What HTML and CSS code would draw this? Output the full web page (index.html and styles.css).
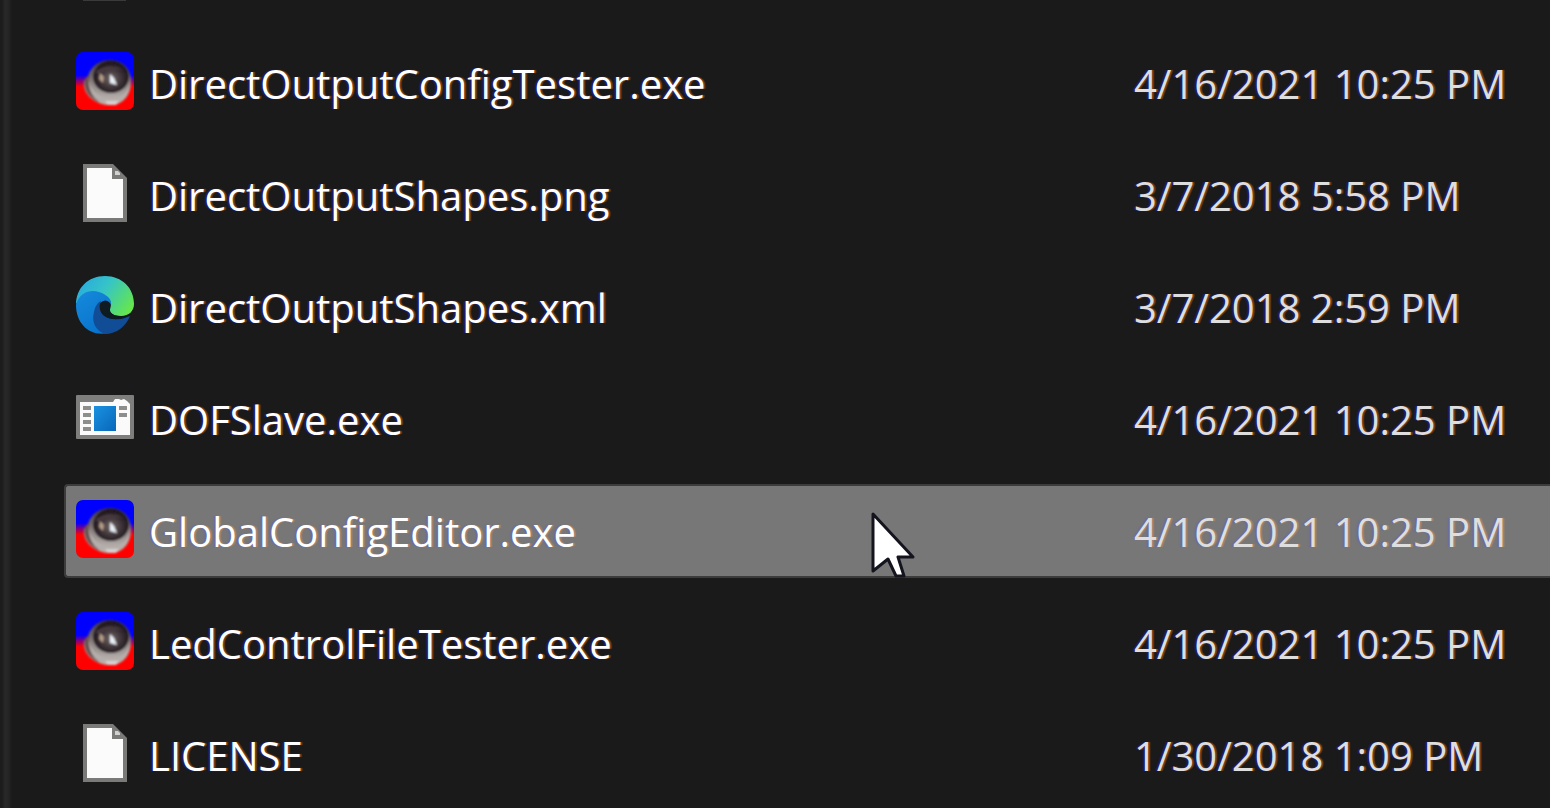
FILE: index.html
```
<!DOCTYPE html>
<html lang="en">
<head>
    <meta charset="UTF-8" />
    <meta name="viewport" content="width=device-width, initial-scale=1" />
    <title>DirectOutput</title>
    <link rel="stylesheet" href="styles.css">
</head>
<body>
    <!-- Shared icons -->
    <svg class="icon-defs" aria-hidden="true">
        <defs>
            <linearGradient id="rimFill" x1="0" y1="0" x2="0" y2="1">
                <stop offset="0" stop-color="#3b3038" />
                <stop offset="0.5" stop-color="#8a8280" />
                <stop offset="1" stop-color="#c4bebc" />
            </linearGradient>
            <radialGradient id="ballFill" cx="0.5" cy="0.55" r="0.55">
                <stop offset="0" stop-color="#75686a" />
                <stop offset="0.5" stop-color="#40363a" />
                <stop offset="1" stop-color="#170f14" />
            </radialGradient>
            <linearGradient id="skyFill" x1="0" y1="0" x2="0" y2="1">
                <stop offset="0.4" stop-color="#0000ff" />
                <stop offset="0.5" stop-color="#8a0078" />
                <stop offset="0.6" stop-color="#ff0000" />
            </linearGradient>
            <linearGradient id="edgeTop" x1="0" y1="0.2" x2="1" y2="0.7">
                <stop offset="0" stop-color="#28a8e0" />
                <stop offset="0.45" stop-color="#36c5c6" />
                <stop offset="1" stop-color="#66e64c" />
            </linearGradient>
            <linearGradient id="edgeLeft" x1="0" y1="0" x2="0.6" y2="1">
                <stop offset="0" stop-color="#168bdc" />
                <stop offset="1" stop-color="#0873cc" />
            </linearGradient>
            <linearGradient id="paneFill" x1="0" y1="0" x2="1" y2="1">
                <stop offset="0" stop-color="#1b91e0" />
                <stop offset="1" stop-color="#0867ba" />
            </linearGradient>
            <filter id="soft"><feGaussianBlur stdDeviation="0.8" /></filter>
        </defs>
        <symbol id="icon-ball" viewBox="0 0 58 58">
            <rect width="58" height="58" rx="7" fill="url(#skyFill)" />
            <g filter="url(#soft)">
                <path d="M12 24C16 12 25 8 34 8c13 0 21 9 21 22 0 14-9 23-21 23C18 53 6 41 8 29z" fill="url(#rimFill)" />
                <path d="M9 27c-2 11 5 20 15 24C16 42 13 33 14 22z" fill="#65504f" />
                <path d="M13 24c0 14 8 21 22 22 10 0 17-6 19-15 0 14-9 22-20 22-13 0-23-12-21-29z" fill="#b5afab" />
                <ellipse cx="35" cy="25" rx="18" ry="16" fill="url(#ballFill)" />
                <path d="M20 19q14-8 28-1-14-3-27 4z" fill="#4a3b43" />
                <path d="M24 21l4 4-1 6-4-4z" fill="#b29c86" />
                <path d="M34 22l4 4 3 7-7-2z" fill="#e9f0f5" />
                <path d="M29 49h14l-3 4h-8z" fill="#d6d2d1" />
            </g>
        </symbol>
        <symbol id="icon-file" viewBox="0 0 44 58">
            <path d="M0 0h30l14 14v44H0z" fill="#7a7a78" />
            <path d="M4 4h25v11h11v39H4z" fill="#fbfbfb" />
            <path d="M32 7h3l2 2v2h-5z" fill="#d0d0d0" />
        </symbol>
        <symbol id="icon-edge" viewBox="0 0 58 58">
            <path d="M0 29C0 12 12 0 29 0s29 12 29 28c0 7-5 12-13 12-7 0-11-3-11-6 0-2 1-3 1-6 0-5-5-8-10-8C13 18 3 20 0 29z" fill="url(#edgeTop)" />
            <path d="M0 29C3 16 15 13 23 16c9 3 13 8 12 13-1-3-4-5-7-4-10 1-14 25 4 32-18 4-32-9-32-28z" fill="url(#edgeLeft)" />
            <path d="M25 25c-3 6-2 18 15 18 6 0 10-2 14-3-4 10-13 18-25 18-9-3-14-12-11-22 1-5 3-9 7-11z" fill="#104d96" />
            <path d="M28 25c3-1 6 2 6 5-1 3-1 5 1 7 4 4 13 4 18 2-4 4-10 5-16 4-9-1-13-7-12-14 0-2 1-3 3-4z" fill="#0e1b22" />
        </symbol>
        <symbol id="icon-app" viewBox="0 0 58 44">
            <rect width="58" height="44" rx="1" fill="#7e7e7c" />
            <path d="M4 7h33l2-3h4l2 1 3-1 3 2 3 3v31H4z" fill="#fafafa" />
            <path d="M7 11h8v4H7zM7 18h8v4H7zM7 25h8v4H7zM7 32h8v4H7zM43 11h8v4h-8zM43 18h8v4h-8z" fill="#8d8d8b" />
            <rect x="18" y="11" width="22" height="25" fill="url(#paneFill)" />
        </symbol>
    </svg>

    <main class="pane">
        <div class="cut-row">
            <span class="cut-icon"></span>
        </div>
        <table class="files" aria-label="Files">
            <tbody>
                <tr>
                    <td class="name"><div class="entry"><svg class="icon"><use href="#icon-ball" /></svg><span class="label">DirectOutputConfigTester.exe</span></div></td>
                    <td class="date">4/16/2021 10:25 PM</td>
                </tr>
                <tr>
                    <td class="name"><div class="entry"><svg class="icon"><use href="#icon-file" /></svg><span class="label">DirectOutputShapes.png</span></div></td>
                    <td class="date">3/7/2018 5:58 PM</td>
                </tr>
                <tr>
                    <td class="name"><div class="entry"><svg class="icon"><use href="#icon-edge" /></svg><span class="label">DirectOutputShapes.xml</span></div></td>
                    <td class="date">3/7/2018 2:59 PM</td>
                </tr>
                <tr>
                    <td class="name"><div class="entry"><svg class="icon"><use href="#icon-app" /></svg><span class="label">DOFSlave.exe</span></div></td>
                    <td class="date">4/16/2021 10:25 PM</td>
                </tr>
                <tr class="selected">
                    <td class="name">
                        <div class="entry"><svg class="icon"><use href="#icon-ball" /></svg><span class="label">GlobalConfigEditor.exe</span></div>
                        <svg class="cursor" viewBox="0 0 44 66" aria-hidden="true">
                            <path d="M2 2v57l15-12 8 17h8l-6-19h15z" fill="#fff" stroke="#14141f" stroke-width="3" stroke-linejoin="round" />
                        </svg>
                    </td>
                    <td class="date">4/16/2021 10:25 PM</td>
                </tr>
                <tr>
                    <td class="name"><div class="entry"><svg class="icon"><use href="#icon-ball" /></svg><span class="label">LedControlFileTester.exe</span></div></td>
                    <td class="date">4/16/2021 10:25 PM</td>
                </tr>
                <tr>
                    <td class="name"><div class="entry"><svg class="icon"><use href="#icon-file" /></svg><span class="label">LICENSE</span></div></td>
                    <td class="date">1/30/2018 1:09 PM</td>
                </tr>
            </tbody>
        </table>
    </main>
</body>
</html>
```
FILE: styles.css
```
* {
    box-sizing: border-box;
}
body {
    margin: 0;
    background-color: #1a1a1a;
    color: #fff;
    font-family: "Open Sans", "Segoe UI", sans-serif;
    font-size: 40px;
    line-height: 48px;
    overflow: hidden;
}
.icon-defs {
    position: absolute;
    width: 0;
    height: 0;
}
.pane {
    min-height: 100vh;
    padding-left: 64px;
    background: linear-gradient(to right, #1c1c1c 2px, #282828 5px, #262626 8px, #1a1a1a 12px);
}
.cut-row {
    height: 18px;
    padding-left: 19px;
}
.cut-icon {
    display: block;
    width: 43px;
    height: 1px;
    background-color: #3a3a3a;
}
.files {
    width: 100%;
    table-layout: fixed;
    border-collapse: separate;
    border-spacing: 0 18px;
}
td {
    height: 94px;
    padding: 0 0 4px;
    vertical-align: middle;
    white-space: nowrap;
    border: 2px solid transparent;
    border-width: 2px 0;
    text-shadow: -2px 0 1px rgba(30, 30, 170, 0.6), 2px 0 1px rgba(190, 90, 20, 0.6);
}
.name {
    position: relative;
    width: 72%;
    padding-left: 10px;
    border-left-width: 2px;
}
.date {
    padding: 2px 0 0;
    color: #dedede;
}
.entry {
    display: flex;
    align-items: center;
    gap: 15px;
}
.label {
    padding-top: 6px;
}
.icon {
    width: 58px;
    height: 58px;
}
.selected td {
    background-color: #777;
    border-color: #3c3c3c;
    text-shadow: -2px 0 1px rgba(100, 100, 190, 0.6), 2px 0 1px rgba(200, 140, 100, 0.6);
}
.selected .name {
    border-radius: 4px 0 0 4px;
}
.cursor {
    position: absolute;
    top: 26px;
    left: 75%;
    width: 44px;
    height: 66px;
    margin-left: 4px;
}
```
